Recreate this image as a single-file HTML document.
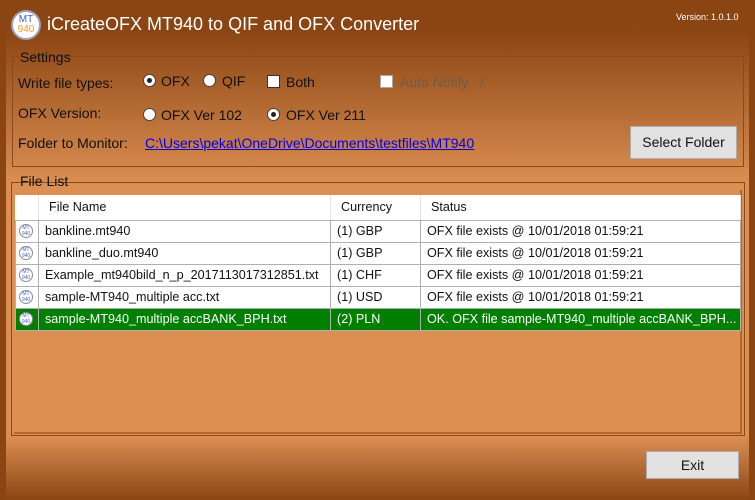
<!DOCTYPE html>
<html><head><meta charset="utf-8"><style>
*{margin:0;padding:0;box-sizing:border-box}
body{width:755px;height:500px;overflow:hidden;position:relative;font-family:"Liberation Sans",sans-serif;font-size:14px;color:#111;
background:linear-gradient(to bottom,#8b4513 0px,#8b4513 30px,#dc8f53 185px,#dc8f53 436px,#8b4513 500px);}
.a{position:absolute;white-space:nowrap}
.strip{position:absolute;top:32px;bottom:0;width:6px;background:#8b4513}
.grp{position:absolute;border:1px solid #8b4a1c}
.lbl{position:absolute;padding:0 3px;font-size:14px;line-height:16px}
.rad{position:absolute;width:13px;height:13px;border-radius:50%;background:#fff;border:1px solid #444}
.rad.on::after{content:"";position:absolute;left:3px;top:3px;width:5px;height:5px;border-radius:50%;background:#222}
.chk{position:absolute;width:13px;height:13px;background:#fff;border:1px solid #333}
.btn{position:absolute;background:#e1e1e1;border:1px solid #adadad;text-align:center;font-size:14px}
table{position:absolute;left:15px;top:195px;width:726px;border-collapse:collapse;background:#fff;table-layout:fixed}
td{height:22px;border:1px solid #b0b0b0;padding:0 0 0 6px;font-size:12.6px;white-space:nowrap;overflow:hidden}
tr.h td{height:25px;border:none;border-right:1px solid #e5e5e5;border-bottom:1px solid #b0b0b0;padding-left:10px}
tr.sel td{background:#007f00;color:#fff}
.ic{width:14px;height:14px;border-radius:50%;background:#fff;border:1px solid #8a8a9a;font-size:5px;line-height:6px;text-align:center;color:#4466cc;margin-left:-3px}
</style></head><body>
<div class="strip" style="left:0"></div><div class="strip" style="right:0;width:6px"></div>
<div class="a" style="left:11px;top:10px;width:30px;height:30px;border-radius:50%;background:#fff;border:2px solid #9aa0b5;text-align:center;font-size:10px;line-height:10px;padding-top:3px"><span style="color:#3a5fc8">MT</span><br><span style="color:#f0a020">940</span></div>
<div class="a" style="left:47px;top:14px;font-size:18px;color:#fff">iCreateOFX MT940 to QIF and OFX Converter</div>
<div class="a" style="left:676px;top:12px;font-size:9px;color:#fff">Version: 1.0.1.0</div>

<div class="grp" style="left:12px;top:56px;width:732px;height:111px"></div>
<div class="lbl" style="left:17px;top:49px">Settings</div>
<div class="a" style="left:18px;top:75px">Write file types:</div>
<div class="rad on" style="left:143px;top:74px"></div><div class="a" style="left:161px;top:73px">OFX</div>
<div class="rad" style="left:203px;top:74px"></div><div class="a" style="left:222px;top:73px">QIF</div>
<div class="chk" style="left:267px;top:75px"></div><div class="a" style="left:286px;top:74px">Both</div>
<div class="chk" style="left:380px;top:75px;border-color:#aaa"></div><div class="a" style="left:400px;top:74px;color:#6f5a48">Auto Notify &nbsp;&nbsp;/</div>
<div class="a" style="left:18px;top:105px">OFX Version:</div>
<div class="rad" style="left:143px;top:108px"></div><div class="a" style="left:161px;top:107px">OFX Ver 102</div>
<div class="rad on" style="left:267px;top:108px"></div><div class="a" style="left:286px;top:107px">OFX Ver 211</div>
<div class="a" style="left:18px;top:135px">Folder to Monitor:</div>
<div class="a" style="left:145px;top:135px;color:#0000ee;text-decoration:underline">C:\Users\pekat\OneDrive\Documents\testfiles\MT940</div>
<div class="btn" style="left:630px;top:126px;width:107px;height:33px;line-height:31px">Select Folder</div>

<div class="grp" style="left:11px;top:182px;width:734px;height:254px"></div>
<div class="a" style="left:14px;top:190px;width:728px;height:244px;background:#dc8f53;border-bottom:2px solid #b5642d;border-right:2px solid #b5642d"></div>
<div class="lbl" style="left:17px;top:173px">File List</div>
<table>
<colgroup><col style="width:23px"><col style="width:292px"><col style="width:90px"><col></colgroup>
<tr class="h"><td style="padding:0"></td><td>File Name</td><td>Currency</td><td>Status</td></tr>
<tr><td><div class="ic">MT<br>940</div></td><td>bankline.mt940</td><td>(1) GBP</td><td>OFX file exists @ 10/01/2018 01:59:21</td></tr>
<tr><td><div class="ic">MT<br>940</div></td><td>bankline_duo.mt940</td><td>(1) GBP</td><td>OFX file exists @ 10/01/2018 01:59:21</td></tr>
<tr><td><div class="ic">MT<br>940</div></td><td>Example_mt940bild_n_p_2017113017312851.txt</td><td>(1) CHF</td><td>OFX file exists @ 10/01/2018 01:59:21</td></tr>
<tr><td><div class="ic">MT<br>940</div></td><td>sample-MT940_multiple acc.txt</td><td>(1) USD</td><td>OFX file exists @ 10/01/2018 01:59:21</td></tr>
<tr class="sel"><td><div class="ic">MT<br>940</div></td><td>sample-MT940_multiple accBANK_BPH.txt</td><td>(2) PLN</td><td>OK. OFX file sample-MT940_multiple accBANK_BPH...</td></tr>
</table>
<div class="btn" style="left:646px;top:451px;width:93px;height:28px;line-height:26px">Exit</div>
</body></html>
